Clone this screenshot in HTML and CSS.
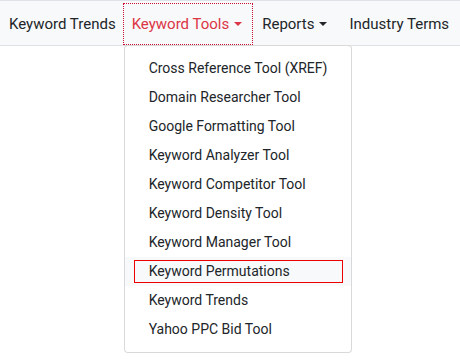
FILE: index.html
```html
<!DOCTYPE html>
<html>
<head>
    <title>Keyword Tools</title>
    <link rel="stylesheet" href="styles.css">
</head>
<body>
<nav class="navbar">
    <a class="nav-link" href="#">Keyword Trends</a>
    <div class="nav-item">
        <a class="nav-link dropdown-toggle active" href="#">Keyword Tools</a>
        <div class="dropdown-menu">
            <a class="dropdown-item" href="#">Cross Reference Tool (XREF)</a>
            <a class="dropdown-item" href="#">Domain Researcher Tool</a>
            <a class="dropdown-item" href="#">Google Formatting Tool</a>
            <a class="dropdown-item" href="#">Keyword Analyzer Tool</a>
            <a class="dropdown-item" href="#">Keyword Competitor Tool</a>
            <a class="dropdown-item" href="#">Keyword Density Tool</a>
            <a class="dropdown-item" href="#">Keyword Manager Tool</a>
            <a class="dropdown-item hover" href="#">Keyword Permutations</a>
            <a class="dropdown-item" href="#">Keyword Trends</a>
            <a class="dropdown-item" href="#">Yahoo PPC Bid Tool</a>
        </div>
    </div>
    <a class="nav-link dropdown-toggle" href="#">Reports</a>
    <a class="nav-link nav-last" href="#">Industry Terms</a>
</nav>
</body>
</html>
```

FILE: styles.css
```css
html, body {
    min-height: 360px;
}
body {
    margin: 0;
    font-family: Roboto, "Liberation Sans", sans-serif;
    color: #212529;
    background: #fff;
}
.navbar {
    display: flex;
    background-color: #f8f9fa;
    border-top: 1px solid #dee2e6;
    border-bottom: 1px solid #dee2e6;
    padding: 3px 0 1px 1px;
    white-space: nowrap;
}
.nav-item {
    position: relative;
    flex-shrink: 0;
    margin-right: 2px;
}
.nav-link {
    display: block;
    flex-shrink: 0;
    padding: 8px 8px;
    font-size: 15px;
    line-height: 24px;
    color: #212529;
    text-decoration: none;
}
.nav-link.active {
    color: #dc3545;
    outline: 1px dotted #c8102e;
}
.nav-last {
    margin-left: 4px;
}
.dropdown-toggle {
    padding-right: 10px;
}
.dropdown-toggle::after {
    content: "";
    display: inline-block;
    margin-left: 5px;
    vertical-align: 3px;
    border-top: 4px solid;
    border-left: 4px solid transparent;
    border-right: 4px solid transparent;
}
.dropdown-menu {
    position: absolute;
    top: 41px;
    left: 0;
    width: 226px;
    padding: 8px 0;
    background: #fff;
    border: 1px solid rgba(0, 0, 0, .15);
    border-radius: 4px;
    z-index: 10;
}
.dropdown-item {
    position: relative;
    display: block;
    padding: 4px 24px;
    font-size: 14px;
    line-height: 21px;
    color: #212529;
    text-decoration: none;
    white-space: nowrap;
}
.dropdown-item.hover {
    background-color: #f8f9fa;
}
.dropdown-item.hover::after {
    content: "";
    position: absolute;
    top: 3px;
    bottom: 3px;
    left: 9px;
    right: 8px;
    border: 1px solid #e00;
}
```
